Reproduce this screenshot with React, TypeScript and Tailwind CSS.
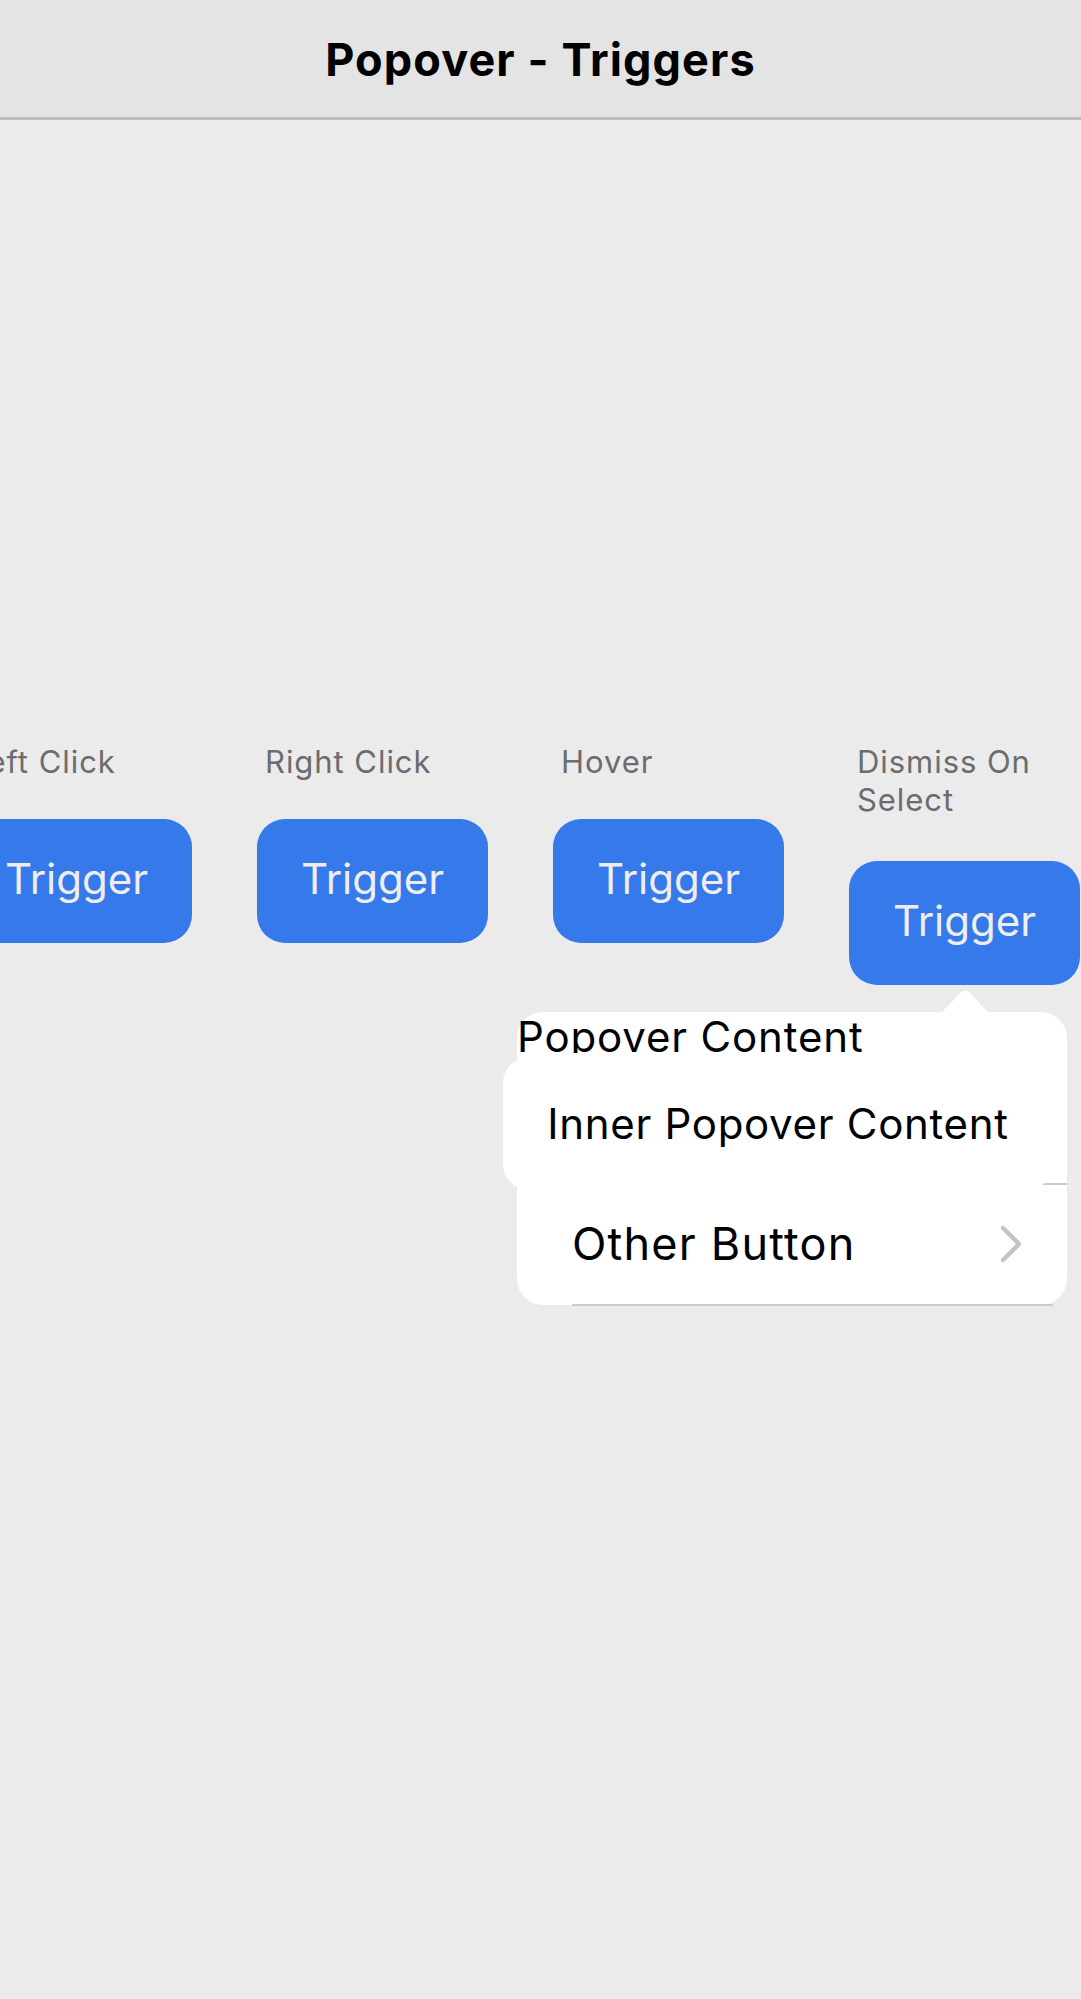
import React from "react";

function Column({
  label,
  mt,
  children,
}: {
  label: React.ReactNode;
  mt: string;
  children?: React.ReactNode;
}) {
  return (
    <div className="flex w-[231px] shrink-0 flex-col">
      <div className="pl-[8px] text-[31px] leading-[38px] tracking-[0.95px] text-[#6b6b70] whitespace-nowrap">
        {label}
      </div>
      <div className={`relative ${mt}`}>
        <button className="flex h-[124px] w-[231px] items-center justify-center rounded-[28px] bg-[#3579ea] pb-[5px] text-[42px] text-[#eeeeee]">
          Trigger
        </button>
        {children}
      </div>
    </div>
  );
}

export default function App() {
  return (
    <div className="min-h-[1999px] overflow-hidden bg-[#ebebeb] font-['Inter',sans-serif] text-black">
      <header className="flex h-[120px] items-center justify-center border-b-[3px] border-[#bdbdbd] bg-[#e4e4e4] pt-[3px]">
        <h1 className="text-[45px] font-bold tracking-[1.1px]">Popover - Triggers</h1>
      </header>
      <main className="ml-[-39px] flex gap-[65px] pt-[623px]">
        <Column label="Left Click" mt="mt-[38px]" />
        <Column label="Right Click" mt="mt-[38px]" />
        <Column label="Hover" mt="mt-[38px]" />
        <Column
          label={
            <>
              Dismiss On
              <br />
              Select
            </>
          }
          mt="mt-[42px]"
        >
          <div className="absolute left-[-332px] top-[151px] z-20 w-[550px] rounded-[26px] bg-white">
            <svg
              className="absolute left-[424px] top-[-25px]"
              width="48"
              height="26"
              viewBox="0 0 48 26"
            >
              <path d="M0 26 L2 24 L19 6 Q24 1 29 6 L46 24 L48 26 Z" fill="#ffffff" />
            </svg>
            <div className="h-[41px] overflow-hidden whitespace-nowrap text-[42px] leading-[50px] tracking-[0.85px]">
              Popover Content
            </div>
            <div className="relative z-10 ml-[-14px] mt-[4px] flex h-[133px] w-[550px] items-center justify-center rounded-[26px] bg-white text-[42px] tracking-[0.7px] whitespace-nowrap">
              Inner Popover Content
            </div>
            <div className="relative mt-[-7px] flex h-[122px] items-center justify-between pl-[55px] pr-[44px]">
              <div className="absolute left-[55px] right-0 top-0 h-[2px] bg-[#cbcbcf]" />
              <span className="text-[45px] tracking-[1.2px] whitespace-nowrap">Other Button</span>
              <svg width="24" height="40" viewBox="0 0 24 40" fill="none">
                <polyline
                  points="4,4 20,20 4,36"
                  stroke="#c4c4c7"
                  strokeWidth="4.5"
                  strokeLinecap="round"
                  strokeLinejoin="round"
                />
              </svg>
              <div className="absolute bottom-[-1px] left-[55px] right-[14px] h-[2px] bg-[#cbcbcf]" />
            </div>
          </div>
        </Column>
      </main>
    </div>
  );
}
